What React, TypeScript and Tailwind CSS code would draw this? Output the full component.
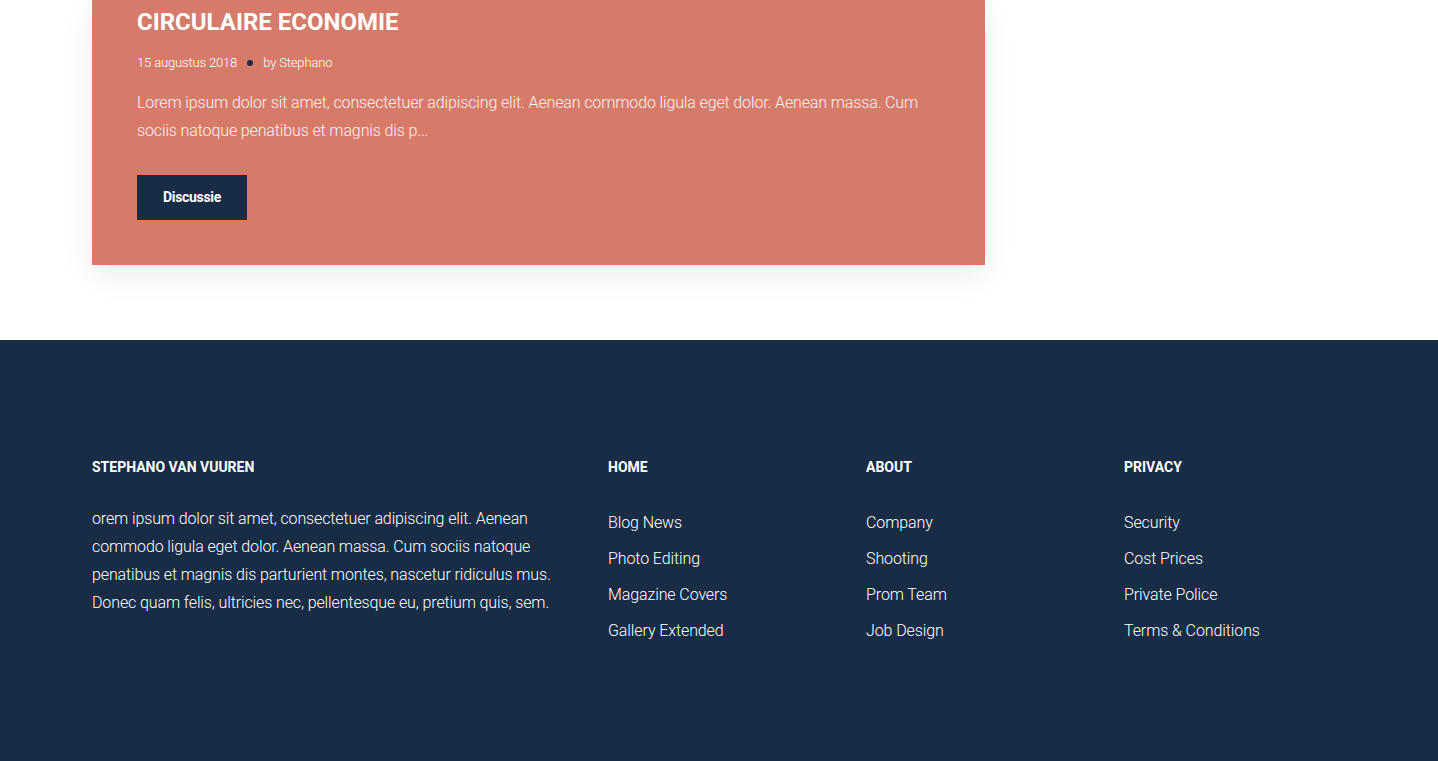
export default function App() {
  const cols = [
    { title: "HOME", links: ["Blog News", "Photo Editing", "Magazine Covers", "Gallery Extended"] },
    { title: "ABOUT", links: ["Company", "Shooting", "Prom Team", "Job Design"] },
    { title: "PRIVACY", links: ["Security", "Cost Prices", "Private Police", "Terms & Conditions"] },
  ];
  return (
    <div className="min-h-screen bg-white font-['Roboto',sans-serif] text-white">
      <section className="pl-[92px] pb-[75px]">
        <div className="w-[893px] bg-[#d67b69] pl-[45px] pr-[45px] pt-[8px] pb-[45px] shadow-[0_10px_30px_rgba(0,0,0,0.08)]">
          <h2 className="text-[24px] leading-[29px] font-bold">CIRCULAIRE ECONOMIE</h2>
          <div className="mt-[16px] flex items-center text-[13px] leading-[20px] font-light tracking-[-0.15px]">
            <span>15 augustus 2018</span>
            <span className="ml-[10px] mr-[10px] h-[6px] w-[6px] rounded-full bg-[#182c46]" />
            <span>by Stephano</span>
          </div>
          <p className="mt-[16px] text-[16px] leading-[28px] font-light tracking-[-0.13px] text-white/90">
            Lorem ipsum dolor sit amet, consectetuer adipiscing elit. Aenean commodo ligula eget dolor. Aenean massa. Cum sociis natoque penatibus et magnis dis p...
          </p>
          <button className="mt-[30px] flex h-[45px] w-[110px] items-center justify-center bg-[#182c46] text-[14px] font-bold tracking-[-0.3px] text-white">
            Discussie
          </button>
        </div>
      </section>
      <footer className="bg-[#182c46] pl-[92px] pt-[117px] pb-[130px]">
        <div className="grid grid-cols-[516px_258px_258px_258px]">
          <div>
            <h3 className="text-[14px] leading-[20px] font-bold">STEPHANO VAN VUUREN</h3>
            <p className="mt-[28px] w-[470px] text-[16px] leading-[28px] font-light tracking-[-0.12px]">
              orem ipsum dolor sit amet, consectetuer adipiscing elit. Aenean commodo ligula eget dolor. Aenean massa. Cum sociis natoque penatibus et magnis dis parturient montes, nascetur ridiculus mus. Donec quam felis, ultricies nec, pellentesque eu, pretium quis, sem.
            </p>
          </div>
          {cols.map((c) => (
            <div key={c.title}>
              <h3 className="text-[14px] leading-[20px] font-bold">{c.title}</h3>
              <ul className="mt-[28px]">
                {c.links.map((l) => (
                  <li key={l} className="flex h-[36px] items-center text-[16px] font-light tracking-[-0.1px]">
                    {l}
                  </li>
                ))}
              </ul>
            </div>
          ))}
        </div>
      </footer>
    </div>
  );
}
